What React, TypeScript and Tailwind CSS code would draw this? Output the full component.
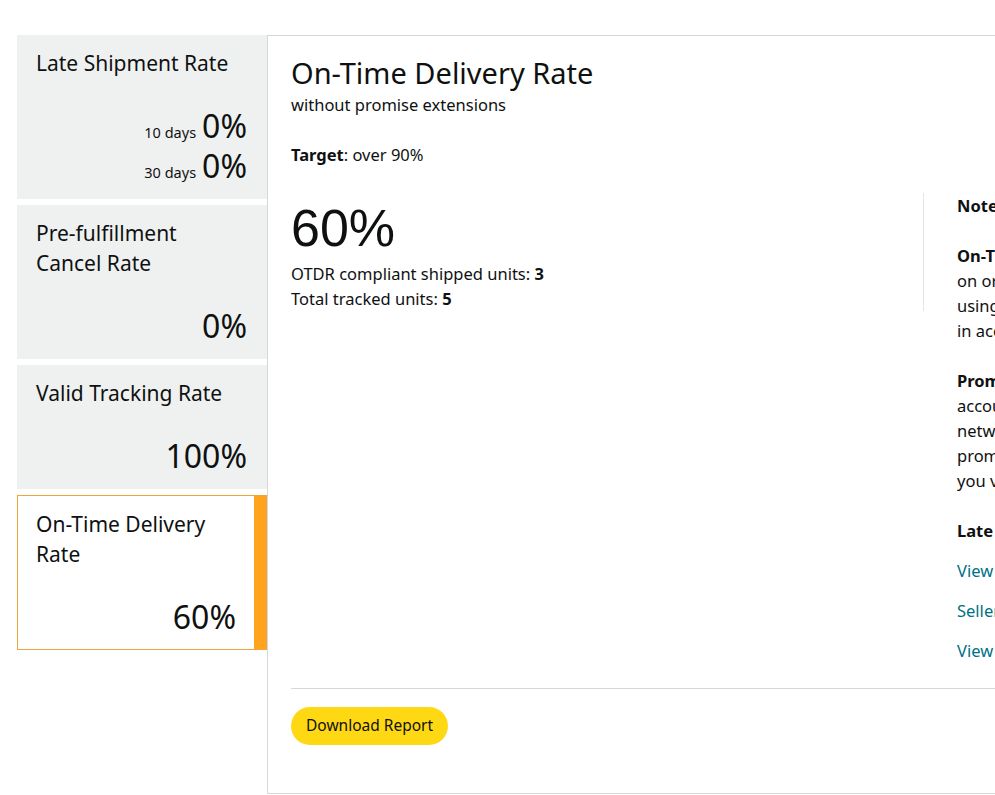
import React from 'react';

type Metric = {
  title: string;
  values: { label?: string; value: string }[];
  selected?: boolean;
};

const metrics: Metric[] = [
  { title: 'Late Shipment Rate', values: [{ label: '10 days', value: '0%' }, { label: '30 days', value: '0%' }] },
  { title: 'Pre-fulfillment Cancel Rate', values: [{ value: '0%' }] },
  { title: 'Valid Tracking Rate', values: [{ value: '100%' }] },
  { title: 'On-Time Delivery Rate', values: [{ value: '60%' }], selected: true },
];

function MetricCard({ m }: { m: Metric }) {
  if (m.selected) {
    return (
      <div className="flex bg-white border border-[#f0a53a]">
        <div className="flex-1 pl-[18px] pr-[18px] pt-[13px] pb-[14px]">
          <h3 className="text-[21px] leading-[30px] text-[#0f1111]">{m.title}</h3>
          <div className="mt-[30px] flex flex-col gap-1 items-end">
            {m.values.map((v, i) => (
              <div key={i} className="text-[32px] leading-[36px] text-[#0f1111]">{v.value}</div>
            ))}
          </div>
        </div>
        <div className="w-[12px] bg-[#ffa41c]" />
      </div>
    );
  }
  return (
    <div className="bg-[#eff1f1] pl-[19px] pr-[20px] pt-[13px] pb-[15px]">
      <h3 className="text-[21px] leading-[30px] text-[#0f1111]">{m.title}</h3>
      <div className="mt-[30px] flex flex-col gap-1 items-end">
        {m.values.map((v, i) => (
          <div key={i} className="flex items-baseline gap-[6px] text-[#0f1111]">
            {v.label && <span className="text-[14.5px]">{v.label}</span>}
            <span className="text-[32px] leading-[36px]">{v.value}</span>
          </div>
        ))}
      </div>
    </div>
  );
}

export default function App() {
  return (
    <div className="w-screen h-[795px] overflow-hidden bg-white text-[#0f1111]" style={{ fontFamily: '"Noto Sans", "Open Sans", Arial, sans-serif' }}>
      <div className="flex pl-[17px] pt-[35px] w-[1400px]">
        {/* ── Metric list ── */}
        <aside className="w-[250px] shrink-0 flex flex-col gap-[6px]">
          {metrics.map((m) => (
            <MetricCard key={m.title} m={m} />
          ))}
        </aside>

        {/* ── Detail panel ── */}
        <main className="flex-1 h-[759px] border-t border-l border-b border-[#d5d9d9] pl-[23px] pt-[18px]">
          <h1 className="text-[29px] leading-[38px]">On-Time Delivery Rate</h1>
          <p className="text-[16.5px] leading-[25px]">without promise extensions</p>
          <p className="text-[16.5px] leading-[25px] mt-[25px]">
            <b className="font-bold">Target</b>: over 90%
          </p>

          <div className="flex items-start mt-[26px]">
            <div className="w-[633px] shrink-0 border-r border-[#e3e6e6]">
              <div className="text-[52px] leading-[66px] mt-[2px]" style={{ fontFamily: '"Liberation Sans", Arial, sans-serif' }}>60%</div>
              <p className="text-[16.5px] leading-[25px]">OTDR compliant shipped units: <b>3</b></p>
              <p className="text-[16.5px] leading-[25px]">Total tracked units: <b>5</b></p>
            </div>

            <div className="pl-[33px] w-[480px] text-[16.5px] leading-[25px] whitespace-nowrap">
              <p className="font-bold">Notes</p>
              <p className="font-bold mt-[25px]">On-Time Delivery Rate:</p>
              <p>on orders with valid tracking, measured</p>
              <p>using carrier delivery scans and dates</p>
              <p>in accordance with the delivery promise.</p>
              <p className="font-bold mt-[25px]">Promise extensions:</p>
              <p>account for delays caused by carrier</p>
              <p>network disruptions; orders with a</p>
              <p>promise extension are excluded when</p>
              <p>you view the rate without extensions.</p>
              <p className="font-bold mt-[25px]">Late deliveries</p>
              <div className="flex flex-col gap-[15px] mt-[15px] text-[#007185]">
                <a href="#">View On-Time Delivery Rate policy</a>
                <a href="#">Seller Fulfilled Prime requirements</a>
                <a href="#">View late delivery details</a>
              </div>
            </div>
          </div>

          <div className="border-t border-[#d5d9d9] mt-[25px] pt-[18px]">
            <button className="h-[38px] px-[15px] rounded-full bg-[#ffd814] text-[15.5px] text-[#0f1111]">
              Download Report
            </button>
          </div>
        </main>
      </div>
    </div>
  );
}
